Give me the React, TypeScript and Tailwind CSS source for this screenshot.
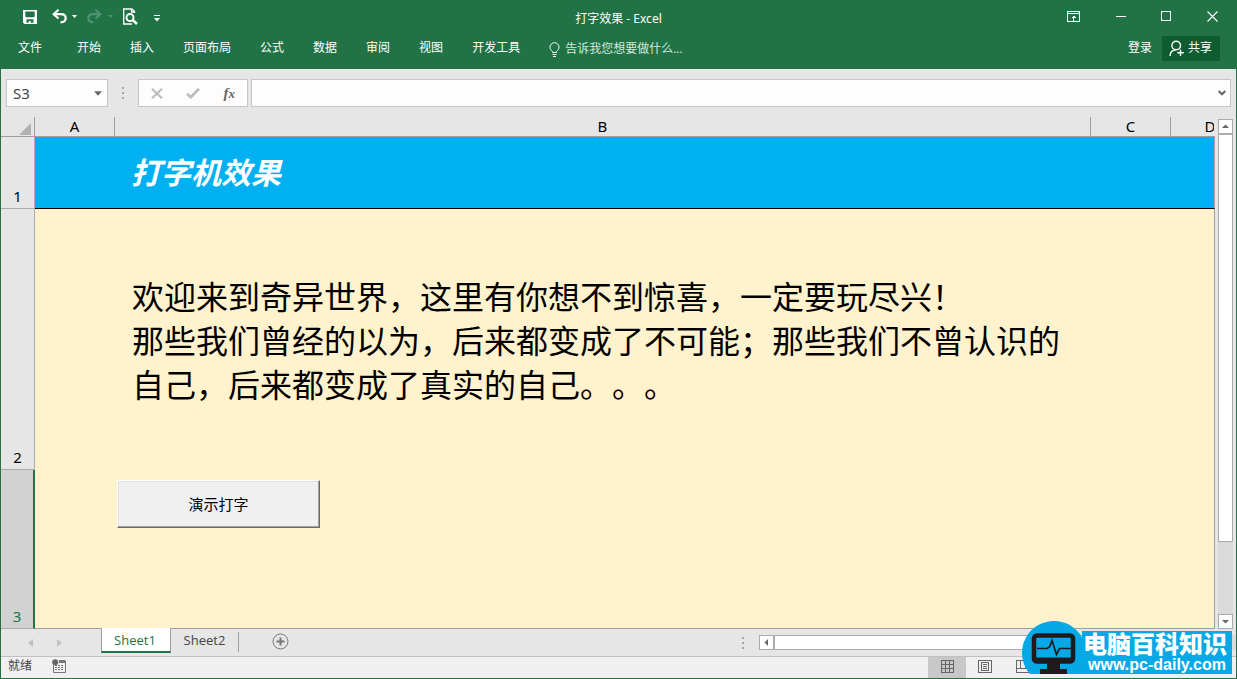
import type { ReactNode } from 'react';

const menus = ['开始', '插入', '页面布局', '公式', '数据', '审阅', '视图', '开发工具'];

function Caret({ className }: { className: string }) {
  return (
    <svg className={className} width="7" height="4" viewBox="0 0 7 4" fill="currentColor" aria-hidden="true">
      <path d="M0 0h7L3.5 4z" />
    </svg>
  );
}

function Dots() {
  return (
    <div className="flex flex-col gap-[3px]" aria-hidden="true">
      <span className="size-0.5 bg-[#a6a6a6]" />
      <span className="size-0.5 bg-[#a6a6a6]" />
      <span className="size-0.5 bg-[#a6a6a6]" />
    </div>
  );
}

function ScrollButton({ label, d }: { label: string; d: string }) {
  return (
    <button aria-label={label} className="flex size-[15px] shrink-0 items-center justify-center border border-[#ababab] bg-white text-[#666]">
      <svg width="7" height="7" viewBox="0 0 7 7" fill="currentColor">
        <path d={d} />
      </svg>
    </button>
  );
}

function TitleBar() {
  return (
    <div className="grid h-[33px] grid-cols-[1fr_auto_1fr] items-center">
      <div className="flex items-center pl-[22px]">
        <button aria-label="保存" className="mr-[15px]">
          <svg width="14" height="14" viewBox="0 0 14 14" fill="#fff">
            <path fillRule="evenodd" d="M0 0h14v14H1.500L0 12.500zM2.300 1.500v5l.7.7h8l.7-.7v-5zM3.500 9.300v3.500h2.200v-1.700h2v1.700h2.800V9.300z" />
          </svg>
        </button>
        <button aria-label="撤消" className="mr-[5px]">
          <svg width="15" height="15" viewBox="0 0 15 15" fill="none" stroke="#fff" strokeWidth="2.200">
            <path d="M6.500.8 1.700 5.200l4.800 4.300M2 5.200h7c3 0 4.700 1.700 4.700 4.100 0 2.500-1.900 4-5.200 4" />
          </svg>
        </button>
        <Caret className="h-[3px] w-[5px] text-white" />
        <button aria-label="恢复" className="mr-1.5 ml-2.5">
          <svg width="15" height="15" viewBox="0 0 15 15" fill="none" stroke="#4e9470" strokeWidth="2.200">
            <path d="m8.500.8 4.800 4.400-4.800 4.300M13 5.200H6C3 5.200 1.300 6.900 1.300 9.300c0 2.500 1.900 4 5.200 4" />
          </svg>
        </button>
        <Caret className="h-[3px] w-[5px] text-[#4e9470]" />
        <button aria-label="打印预览" className="ml-[10px]">
          <svg width="15" height="17" viewBox="0 0 15 17" fill="none" stroke="#fff">
            <path d="M11.500 5V3.500L9 1H.700v15H9M8.500 1v3h3" strokeWidth="1.300" />
            <circle cx="7" cy="9.500" r="3.500" strokeWidth="1.900" />
            <path d="m9.700 12 4.300 4" strokeWidth="2.500" />
          </svg>
        </button>
        <button aria-label="自定义快速访问工具栏" className="mt-[3px] ml-4 text-white">
          <svg width="6" height="7" viewBox="0 0 6 7" fill="currentColor">
            <path d="M0 0h6v1H0zM0 3h6L3 6.500z" />
          </svg>
        </button>
      </div>
      <h1 className="pt-1 font-['Noto_Sans','Noto_Sans_CJK_SC',sans-serif] text-xs leading-[18px]">打字效果 - Excel</h1>
      <div className="flex items-center justify-end gap-[35px] pr-[18px]">
        <button aria-label="功能区显示选项">
          <svg width="13" height="11" viewBox="0 0 13 11" fill="none" stroke="#fff" shapeRendering="crispEdges">
            <path d="M.5.5h12v10H.5zM0 2.500h13M6.500 4.500v5M4.500 6.500h4M5.500 5.500h2" />
          </svg>
        </button>
        <button aria-label="最小化">
          <svg width="11" height="11" viewBox="0 0 11 11" stroke="#fff" shapeRendering="crispEdges">
            <path d="M.5 5.500h10" />
          </svg>
        </button>
        <button aria-label="最大化">
          <svg width="11" height="11" viewBox="0 0 11 11" fill="none" stroke="#fff" shapeRendering="crispEdges">
            <path d="M.5.500h9v9H.5z" />
          </svg>
        </button>
        <button aria-label="关闭">
          <svg width="11" height="11" viewBox="0 0 11 11" stroke="#fff" strokeWidth="1.100">
            <path d="m.5.500 10 10M10.500.500l-10 10" />
          </svg>
        </button>
      </div>
    </div>
  );
}

function MenuBar() {
  return (
    <div className="flex h-9 items-start text-xs leading-[18px]">
      <nav className="flex gap-[29px] pt-1.5 pl-[17px]">
        <button className="mr-1.5">文件</button>
        {menus.map((m) => (
          <button key={m}>{m}</button>
        ))}
      </nav>
      <button className="flex items-center gap-[5px] pt-[7px] pl-[29px] text-[#d5e6dc]">
        <svg width="11" height="15" viewBox="0 0 11 15" fill="none" stroke="#fff">
          <path d="M3.500 10.500v-1C2 8.300 1 7 1 5.200a4.500 4.500 0 0 1 9 0C10 7 9 8.300 7.500 9.500v1zM3.500 12.500h4M4 14.500h3" />
        </svg>
        告诉我您想要做什么...
      </button>
      <div className="ml-auto flex gap-2.5 pr-4">
        <button className="self-start pt-1.5">登录</button>
        <button className="mt-[3px] flex h-[25px] items-center gap-[3px] bg-[#0e5c2f] pr-2 pb-0.5 pl-[7px]">
          <svg className="mt-0.5" width="16" height="17" viewBox="0 0 16 17" fill="none" stroke="#fff" strokeWidth="1.400">
            <circle cx="7.200" cy="5.500" r="4.300" />
            <path d="M1 16c.2-4 2.300-6 6-6.300M11.500 9.500v6.500M8.300 12.700h6.500" />
          </svg>
          共享
        </button>
      </div>
    </div>
  );
}

function FormulaBar() {
  return (
    <div className="flex h-12 items-center px-[5px] font-['Noto_Sans','Noto_Sans_CJK_SC',sans-serif]">
      <div className="flex h-7 w-[102px] items-center border border-[#c6c6c6] bg-[#fdfdfd] text-[#444]">
        <input aria-label="名称框" defaultValue="S3" className="w-full min-w-0 pl-1.5 text-[15px] outline-none" />
        <button aria-label="展开名称框" className="pr-[5px]">
          <Caret className="h-[5px] w-[8px] text-[#666]" />
        </button>
      </div>
      <div className="flex w-[30px] justify-center">
        <Dots />
      </div>
      <div className="flex h-7 w-[110px] items-center justify-between border border-[#c6c6c6] bg-[#fdfdfd] px-3">
        <button aria-label="取消">
          <svg width="12" height="11" viewBox="0 0 12 11" stroke="#bdbdbd" strokeWidth="2.200">
            <path d="m1 .8 10 9.500M11 .8 1 10.300" />
          </svg>
        </button>
        <button aria-label="输入">
          <svg width="14" height="11" viewBox="0 0 14 11" fill="none" stroke="#bdbdbd" strokeWidth="2.800">
            <path d="m1 5.800 3.800 3.400L13 .8" />
          </svg>
        </button>
        <button aria-label="插入函数" className="font-['Liberation_Serif',serif] text-[15px] leading-4 font-bold text-[#666] italic">
          f<span className="text-[13px]">x</span>
        </button>
      </div>
      <div className="ml-[3px] flex h-7 flex-1 items-center border border-[#c6c6c6] bg-[#fdfdfd]">
        <input aria-label="编辑栏" className="min-w-0 flex-1 px-2 text-sm outline-none" />
        <button aria-label="展开编辑栏" className="pr-1">
          <svg width="8" height="6" viewBox="0 0 8 6" fill="none" stroke="#666" strokeWidth="2">
            <path d="m.7 1 3.300 3.300L7.300 1" />
          </svg>
        </button>
      </div>
    </div>
  );
}

function ColumnHead({ children }: { children: ReactNode }) {
  return (
    <th scope="col" className="border-r border-b border-[#9f9f9f] p-0 font-normal">
      {children}
    </th>
  );
}

function Sheet() {
  const rowHead = 'border-r border-b border-[#ababab] p-0 align-bottom text-[15px] leading-6 font-normal';
  return (
    <table className="w-full min-w-0 flex-1 table-fixed border-separate border-spacing-0 font-['Noto_Sans','Noto_Sans_CJK_SC',sans-serif] text-black">
      <colgroup>
        <col className="w-[34px]" />
        <col className="w-20" />
        <col />
        <col className="w-20" />
        <col className="w-11" />
      </colgroup>
      <thead>
        <tr className="h-5 text-[15px] leading-[19px]">
          <th className="border-r border-b border-[#9f9f9f] p-0">
            <button aria-label="全选" className="flex w-full justify-end pt-1 pr-[3px]">
              <svg width="12" height="12" viewBox="0 0 12 12" fill="#b1b1b1">
                <path d="M12 0v12H0z" />
              </svg>
            </button>
          </th>
          <ColumnHead>A</ColumnHead>
          <ColumnHead>B</ColumnHead>
          <ColumnHead>C</ColumnHead>
          <th scope="col" className="border-b border-[#9f9f9f] p-0 font-normal">
            <div className="w-[43px] overflow-hidden">
              <div className="w-[78px] text-center">D</div>
            </div>
          </th>
        </tr>
      </thead>
      <tbody>
        <tr className="h-[72px]">
          <th scope="row" className={rowHead}>1</th>
          <td className="border-b border-black bg-[#00b0f0]" />
          <td className="border-b border-black bg-[#00b0f0] pt-0 pr-0 pb-1 pl-4 font-['Noto_Sans_CJK_SC',sans-serif] text-[30px] leading-10 font-bold text-white italic">
            打字机效果
          </td>
          <td className="border-b border-black bg-[#00b0f0]" />
          <td className="border-r border-b border-r-[#9f9f9f] border-b-black bg-[#00b0f0]" />
        </tr>
        <tr className="h-[261px]">
          <th scope="row" className={rowHead}>2</th>
          <td className="bg-[#fff2cc]" />
          <td className="bg-[#fff2cc] pt-0.5 pr-4 pb-0 pl-[17px] text-[32px] leading-[44px] [text-spacing-trim:space-all]">
            欢迎来到奇异世界，这里有你想不到惊喜，一定要玩尽兴！
            <br />
            那些我们曾经的以为，后来都变成了不可能；那些我们不曾认识的自己，后来都变成了真实的自己。。。
          </td>
          <td className="bg-[#fff2cc]" />
          <td className="border-r border-[#9f9f9f] bg-[#fff2cc]" />
        </tr>
        <tr>
          <th scope="row" className="border-r-2 border-b border-r-[#217346] border-b-[#ababab] bg-[#d2d2d2] p-0 align-bottom text-[15px] leading-6 font-normal text-[#217346]">
            3
          </th>
          <td className="border-b border-[#9f9f9f] bg-[#fff2cc]" />
          <td className="border-b border-[#9f9f9f] bg-[#fff2cc] py-0 pt-2.5 pr-0 pl-0.5 align-top">
            <button className="h-12 w-[203px] border border-t-white border-r-[#696969] border-b-[#696969] border-l-white bg-[#f0f0f0] text-[15px] shadow-[inset_-1px_-1px_0_#a0a0a0,inset_1px_1px_0_#e3e3e3]">
              演示打字
            </button>
          </td>
          <td className="border-b border-[#9f9f9f] bg-[#fff2cc]" />
          <td className="border-r border-b border-[#9f9f9f] bg-[#fff2cc]" />
        </tr>
      </tbody>
    </table>
  );
}

function SheetTabs() {
  return (
    <div className="flex h-[27px] items-start text-[13px] text-[#444]">
      <div className="flex w-[100px] gap-6 self-center pl-[27px] text-[#c0c0c0]">
        <button aria-label="上一个工作表">
          <svg width="5" height="8" viewBox="0 0 5 8" fill="currentColor">
            <path d="M5 0v8L0 4z" />
          </svg>
        </button>
        <button aria-label="下一个工作表">
          <svg width="5" height="8" viewBox="0 0 5 8" fill="currentColor">
            <path d="M0 0v8l5-4z" />
          </svg>
        </button>
      </div>
      <button className="-mt-px h-[25px] w-[70px] border-x border-b-2 border-x-[#9f9f9f] border-b-[#217346] bg-white pr-0.5 leading-[22px] text-[#217346]">
        Sheet1
      </button>
      <button className="mt-[3px] h-5 w-[68px] border-r border-[#9f9f9f] pb-1 leading-4">Sheet2</button>
      <button aria-label="新工作表" className="mt-1 ml-[33px]">
        <svg width="17" height="17" viewBox="0 0 17 17" fill="none" stroke="#777">
          <circle cx="8.500" cy="8.500" r="7.500" />
          <path d="M8.500 4.500v8M4.500 8.500h8" strokeWidth="2" />
        </svg>
      </button>
      <div className="ml-auto flex w-[494px] items-center self-center">
        <Dots />
        <div className="ml-[15px] flex flex-1">
          <ScrollButton label="向左滚动" d="M5 0v7L1.500 3.500z" />
          <div className="h-[15px] w-[330px] border border-[#ababab] bg-white" />
          <div className="h-[15px] flex-1 bg-[#dadada]" />
        </div>
      </div>
    </div>
  );
}

function StatusBar() {
  return (
    <footer className="flex h-[22px] border-t border-[#c0c0c0] bg-[#f0f0f0] text-xs leading-[18px] text-[#444]">
      <span className="w-[51px] pl-[7px]">就绪</span>
      <button aria-label="录制宏" className="self-start pt-0.5">
        <svg width="14" height="14" viewBox="0 0 14 14" fill="none">
          <path d="M7 1h6.500v3H7z" fill="#777" />
          <path d="M1.500 6v7.500h12V2" stroke="#777" />
          <path d="M3 6.500h9M3 8.500h9M3 10.500h9" stroke="#777" strokeDasharray="2 1" />
          <circle cx="3.200" cy="3.200" r="3" fill="#666" />
        </svg>
      </button>
      <div className="mr-[194px] ml-auto flex text-[#666]">
        <button aria-label="普通" className="flex w-[38px] items-start justify-center bg-[#c8c8c8] pt-[3px]">
          <svg width="13" height="13" viewBox="0 0 13 13" fill="none" stroke="currentColor" shapeRendering="crispEdges">
            <path d="M.5.5h12v12H.5zM4.500 0v13M8.500 0v13M0 4.500h13M0 8.500h13" />
          </svg>
        </button>
        <button aria-label="页面布局" className="flex w-[38px] items-start justify-center pt-[3px]">
          <svg width="14" height="13" viewBox="0 0 14 13" fill="none" stroke="currentColor" shapeRendering="crispEdges">
            <path d="M.5.5h13v12H.5zM3.500 2.500h7v8h-7zM5 4.500h4M5 6.500h4M5 8.500h4" />
          </svg>
        </button>
        <button aria-label="分页预览" className="flex w-[38px] items-start justify-center pt-[3px]">
          <svg width="14" height="13" viewBox="0 0 14 13" fill="none" stroke="currentColor" shapeRendering="crispEdges">
            <path d="M.5.5h13v12H.5zM4.500 0v8M9.500 0v8M0 8.500h10" />
          </svg>
        </button>
      </div>
    </footer>
  );
}

function SiteBadge() {
  return (
    <div className="absolute right-1 bottom-1 flex items-end">
      <svg className="-mr-1" width="64" height="53" viewBox="0 0 64 53">
        <path d="M7.900 53A32 32 0 1 1 64 32V53z" fill="#06a9e6" />
        <rect x="12" y="14.500" width="39" height="26" rx="3" fill="none" stroke="#1f1a1c" strokeWidth="4.500" />
        <path d="M12 36.500h39v4H12z" fill="#1f1a1c" />
        <path d="M25 42h13v6h7v5H18v-5h7z" fill="#1f1a1c" />
        <path d="M15 27.500h10l2.500-1.500 2.500-6.500 4.500 14 3-6H49" fill="none" stroke="#1f1a1c" strokeWidth="1.700" />
      </svg>
      <div className="flex h-[43px] flex-col items-center bg-[#06a9e6] pr-[5px] pl-px font-['Liberation_Sans','Noto_Sans_CJK_SC',sans-serif] text-white">
        <span className="text-2xl leading-7 font-black">电脑百科知识</span>
        <span className="pl-1 text-base leading-3 font-bold">www.pc-daily.com</span>
      </div>
    </div>
  );
}

export default function App() {
  return (
    <div className="relative flex min-h-screen flex-col border-x border-b border-[#217346] bg-[#e6e6e6] font-['Open_Sans','Noto_Sans_CJK_SC',sans-serif]">
      <header className="bg-[#217346] text-white">
        <TitleBar />
        <MenuBar />
      </header>
      <FormulaBar />
      <main className="flex flex-1">
        <Sheet />
        <div className="flex w-[21px] shrink-0 flex-col px-[3px] pt-0.5">
          <ScrollButton label="向上滚动" d="M0 5h7L3.500 1.500z" />
          <div className="h-[408px] border border-[#ababab] bg-white" />
          <div className="flex-1 bg-[#dadada]" />
          <ScrollButton label="向下滚动" d="M0 2h7L3.500 5.500z" />
        </div>
      </main>
      <SheetTabs />
      <StatusBar />
      <SiteBadge />
    </div>
  );
}
